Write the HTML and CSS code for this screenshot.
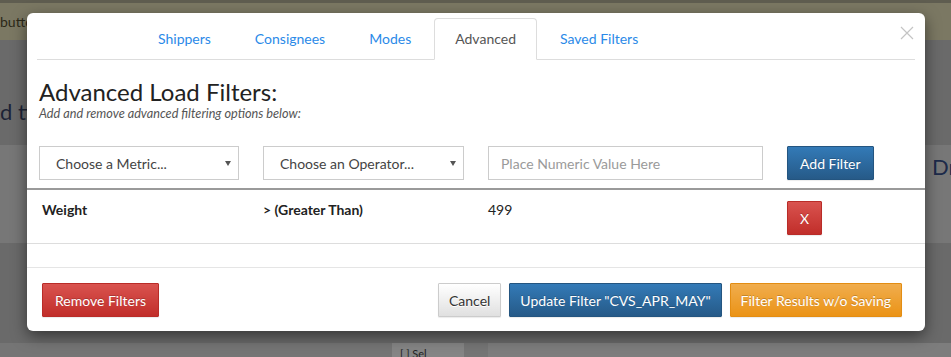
FILE: index.html
```html
<!DOCTYPE html>
<html lang="en">
<head>
    <meta charset="UTF-8">
    <title>Advanced Load Filters</title>
    <link rel="stylesheet" href="styles.css">
</head>
<body>
<div class="page">
    <div class="notice">button to refresh the data</div>
    <div class="page-title">d time window</div>
    <div class="panels">
        <div class="panel-left"></div>
        <div class="panel-right">Drivers</div>
    </div>
    <div class="page-bottom">
        <span class="bottom-box">[ ] Sel</span>
        <span class="bottom-panel"></span>
    </div>
</div>

<div class="modal">
    <div class="modal-header">
        <ul class="nav-tabs">
            <li><a href="#">Shippers</a></li>
            <li><a href="#">Consignees</a></li>
            <li><a href="#">Modes</a></li>
            <li class="active"><a href="#">Advanced</a></li>
            <li><a href="#">Saved Filters</a></li>
        </ul>
        <button class="close" aria-label="Close">
            <svg width="14" height="14" viewBox="0 0 14 14">
                <path d="M1 1 L13 13 M13 1 L1 13" stroke="#c4c4c4" stroke-width="1.2" fill="none"/>
            </svg>
        </button>
    </div>

    <div class="modal-body">
        <div class="intro">
            <h2>Advanced Load Filters:</h2>
            <p class="hint">Add and remove advanced filtering options below:</p>
        </div>

        <div class="filter-form">
            <div class="select-wrap">
                <select>
                    <option>Choose a Metric...</option>
                </select>
            </div>
            <div class="select-wrap">
                <select>
                    <option>Choose an Operator...</option>
                </select>
            </div>
            <input type="text" placeholder="Place Numeric Value Here">
            <button class="btn btn-primary">Add Filter</button>
        </div>

        <div class="filter-row">
            <div class="cell cell-metric">Weight</div>
            <div class="cell cell-op">&gt; (Greater Than)</div>
            <div class="cell">499</div>
            <button class="btn btn-danger btn-x">X</button>
        </div>
    </div>

    <div class="modal-footer">
        <button class="btn btn-danger">Remove Filters</button>
        <div class="footer-right">
            <button class="btn btn-default">Cancel</button>
            <button class="btn btn-primary">Update Filter "CVS_APR_MAY"</button>
            <button class="btn btn-warning">Filter Results w/o Saving</button>
        </div>
    </div>
</div>
</body>
</html>
```

FILE: styles.css
```css
body {
    margin: 0;
    font-family: Lato, "Open Sans", sans-serif;
    background-color: #6a6a6a;
    height: 357px;
    overflow: hidden;
}

/* page behind the backdrop */
.page {
    width: 951px;
}

.notice {
    height: 40px;
    box-sizing: border-box;
    border-top: 3px solid #5f5d50;
    background-color: #7b7863;
    color: #2b2818;
    font-size: 14px;
    line-height: 38px;
    white-space: nowrap;
    overflow: hidden;
}

.page-title {
    height: 105px;
    box-sizing: border-box;
    padding-top: 58px;
    font-size: 22px;
    color: #1c2336;
    white-space: nowrap;
    overflow: hidden;
}

.panels {
    display: grid;
    grid-template-columns: 932px 19px;
    height: 98px;
    background-color: #777777;
}

.panel-right {
    padding-top: 8px;
    font-size: 22px;
    color: #1c2a4a;
    white-space: nowrap;
    overflow: hidden;
}

.page-bottom {
    display: flex;
    margin-top: 100px;
    height: 20px;
    background-color: #757575;
}

.bottom-box {
    margin-left: 392px;
    width: 72px;
    background-color: #858585;
    font-size: 11px;
    line-height: 12px;
    color: #222;
    padding: 5px 0 0 8px;
    box-sizing: border-box;
}

.bottom-panel {
    margin-left: 24px;
    flex: 1;
    background-color: #7d7d7d;
}

/* modal */
.modal {
    position: absolute;
    top: 13px;
    left: 27px;
    width: 898px;
    background-color: #fff;
    border-radius: 6px;
    box-shadow: 0 5px 15px rgba(0, 0, 0, 0.5);
}

.modal-header {
    position: relative;
    padding: 5px 10px 0;
}

.nav-tabs {
    display: flex;
    list-style: none;
    margin: 0;
    padding: 0 0 0 100px;
    border-bottom: 1px solid #dddddd;
}

.nav-tabs li {
    margin-right: 2px;
    margin-bottom: -1px;
}

.nav-tabs a {
    display: block;
    padding: 10px 20px;
    line-height: 20px;
    font-size: 14px;
    color: #2b8ae8;
    text-decoration: none;
    border: 1px solid transparent;
    border-radius: 4px 4px 0 0;
}

.nav-tabs .active a {
    color: #555;
    background-color: #fff;
    border-color: #dddddd #dddddd transparent;
}

.close {
    position: absolute;
    top: 13px;
    right: 11px;
    padding: 0;
    border: none;
    background: none;
    cursor: pointer;
}

.modal-body {
    padding: 19px 0 23px;
}

.intro {
    padding: 0 12px;
}

.intro h2 {
    margin: 0;
    font-size: 24px;
    font-weight: 400;
    line-height: 1.1;
    color: #222;
}

.hint {
    margin: 0;
    font-size: 12.7px;
    font-style: italic;
    line-height: 17px;
    color: #555;
}

.filter-form {
    display: grid;
    grid-template-columns: 200px 201px 275px 87px;
    gap: 24px;
    margin-top: 24px;
    padding: 0 12px 8px;
    border-bottom: 2px solid #9a9a9a;
}

.select-wrap {
    position: relative;
}

.select-wrap::after {
    content: "";
    position: absolute;
    right: 8px;
    top: 15px;
    border-left: 3px solid transparent;
    border-right: 3px solid transparent;
    border-top: 5px solid #555;
    pointer-events: none;
}

.select-wrap select,
.filter-form input {
    width: 100%;
    height: 34px;
    box-sizing: border-box;
    border: 1px solid #cccccc;
    border-radius: 0;
    background-color: #fff;
    font-family: inherit;
    font-size: 14px;
    color: #444;
    appearance: none;
    -webkit-appearance: none;
}

.select-wrap select {
    padding: 0 16px;
}

.filter-form input {
    padding: 0 12px;
}

.filter-form input::placeholder {
    color: #9a9a9a;
}

.filter-row {
    display: grid;
    grid-template-columns: 200px 201px 275px 87px;
    gap: 24px;
    padding: 11px 12px 8px;
    border-bottom: 1px solid #dddddd;
}

.cell {
    font-size: 14px;
    line-height: 18px;
    color: #222;
}

.cell-metric,
.cell-op {
    font-weight: 700;
}

.cell-metric {
    padding-left: 3px;
}

.modal-footer {
    display: flex;
    justify-content: space-between;
    padding: 15px 23px 14px 15px;
    border-top: 1px solid #e5e5e5;
}

.footer-right {
    display: flex;
    gap: 8px;
}

.footer-right .btn {
    padding: 0 10px;
}

/* buttons */
.btn {
    height: 34px;
    padding: 0 12px;
    border: 1px solid transparent;
    border-radius: 1px;
    font-family: inherit;
    font-size: 14px;
    color: #fff;
    text-shadow: 0 -1px 0 rgba(0, 0, 0, 0.2);
    box-shadow: 0 1px 1px rgba(0, 0, 0, 0.08);
    cursor: pointer;
    white-space: nowrap;
}

.btn-primary {
    background-image: linear-gradient(#337ab7, #265a88);
    border-color: #245580;
}

.btn-danger {
    background-image: linear-gradient(#d9534f, #c12e2a);
    border-color: #b92c28;
}

.btn-warning {
    background-image: linear-gradient(#f0ad4e, #eb9316);
    border-color: #e38d13;
}

.btn-default {
    color: #333;
    text-shadow: 0 1px 0 #fff;
    background-image: linear-gradient(#ffffff, #e0e0e0);
    border-color: #cccccc;
}

.filter-form .btn {
    justify-self: start;
}

.btn-x {
    width: 35px;
    padding: 0;
    justify-self: start;
}
```
